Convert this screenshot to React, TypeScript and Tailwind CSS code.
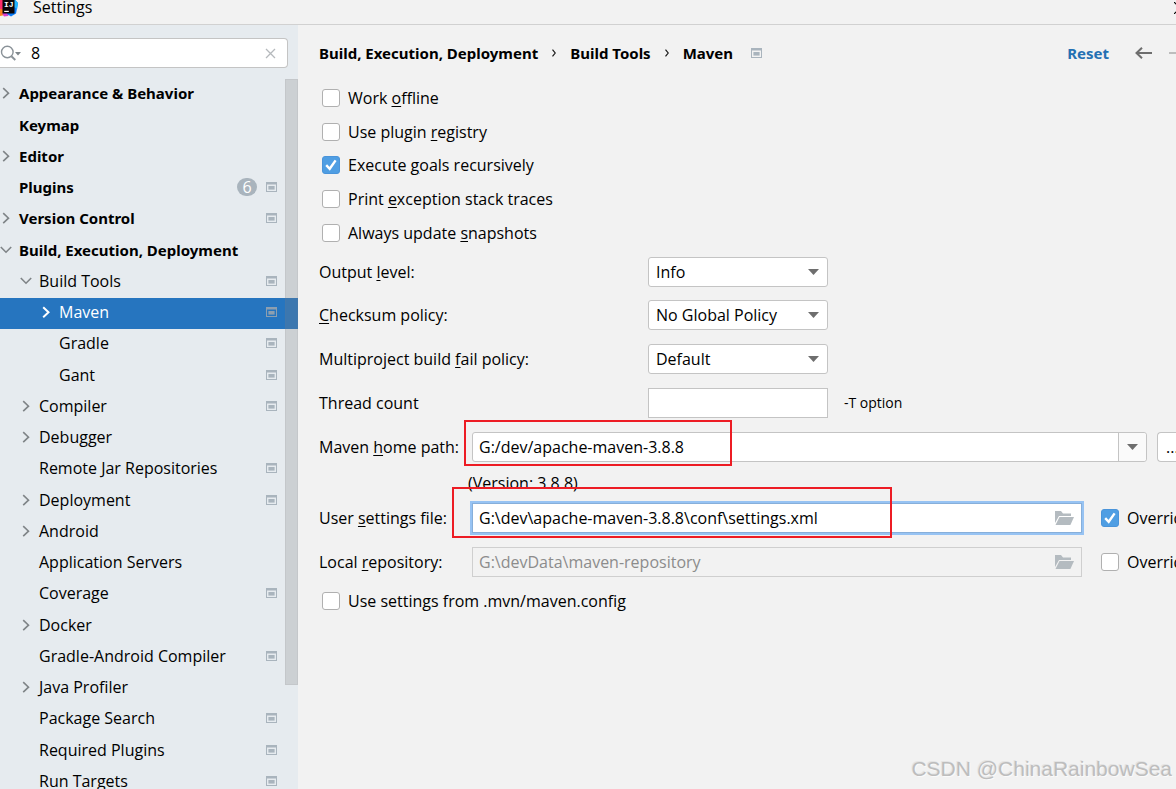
import { useState, type ReactNode } from "react";

type TreeItem = {
  label: string;
  level: 0 | 1 | 2;
  state?: "open" | "closed";
  badge?: number;
  project?: boolean;
  selected?: boolean;
};

const TREE: TreeItem[] = [
  { label: "Appearance & Behavior", level: 0, state: "closed" },
  { label: "Keymap", level: 0 },
  { label: "Editor", level: 0, state: "closed" },
  { label: "Plugins", level: 0, badge: 6, project: true },
  { label: "Version Control", level: 0, state: "closed", project: true },
  { label: "Build, Execution, Deployment", level: 0, state: "open" },
  { label: "Build Tools", level: 1, state: "open", project: true },
  { label: "Maven", level: 2, state: "closed", project: true, selected: true },
  { label: "Gradle", level: 2, project: true },
  { label: "Gant", level: 2, project: true },
  { label: "Compiler", level: 1, state: "closed", project: true },
  { label: "Debugger", level: 1, state: "closed" },
  { label: "Remote Jar Repositories", level: 1, project: true },
  { label: "Deployment", level: 1, state: "closed", project: true },
  { label: "Android", level: 1, state: "closed" },
  { label: "Application Servers", level: 1 },
  { label: "Coverage", level: 1, project: true },
  { label: "Docker", level: 1, state: "closed" },
  { label: "Gradle-Android Compiler", level: 1, project: true },
  { label: "Java Profiler", level: 1, state: "closed" },
  { label: "Package Search", level: 1, project: true },
  { label: "Required Plugins", level: 1, project: true },
  { label: "Run Targets", level: 1, project: true },
];

const INDENT = { 0: "pl-0", 1: "pl-5", 2: "pl-10" };

function Logo() {
  return (
    <svg width="18" height="17" viewBox="0 0 18 17" className="shrink-0" aria-hidden="true">
      <path d="M0 0h5v10H0z" fill="#fe2d6b" />
      <path d="M0 9l4 1 1 5-5 1z" fill="#fc801d" />
      <path d="M2 13h8l-2 3-4 .5z" fill="#d83fd0" />
      <path d="M9 0h6l3 3-2 10.5-5 3L7 14z" fill="#087cfa" />
      <path d="M14 0h1.5L18 3l-.8 6-3.2-2z" fill="#21b5ff" />
      <path d="M2.5 0h12v13.5h-12z" fill="#0a0508" />
      <text x="4" y="6.6" fill="#fff" fontSize="8" fontWeight="700" fontFamily="Liberation Mono, monospace">
        IJ
      </text>
      <path d="M4.2 10.8h4.6v1.2H4.2z" fill="#fff" />
    </svg>
  );
}

function ProjectIcon({ selected = false }: { selected?: boolean }) {
  return (
    <svg
      width="11"
      height="10"
      viewBox="0 0 11 10"
      className={selected ? "shrink-0 text-[#8d9fb0]" : "shrink-0 text-[#a9b4bd]"}
      aria-hidden="true"
    >
      <path d="M0 0h11v10H0zM1 2.5v6.5h9V2.5z" fill="currentColor" fillRule="evenodd" />
      <path d="M2.4 4h6.2v3.6H2.4z" fill="currentColor" />
    </svg>
  );
}

function Chevron({ state, selected }: { state?: "open" | "closed"; selected?: boolean }) {
  return (
    <svg
      width="12"
      height="12"
      viewBox="0 0 12 12"
      className={selected ? "shrink-0 text-white" : "shrink-0 text-[#7f8487]"}
      fill="none"
      stroke="currentColor"
      strokeWidth={selected ? 2 : 1.6}
      aria-hidden="true"
    >
      {state === "closed" && <path d="M3.2 1.2L8.5 6.2L3.2 11.2" />}
      {state === "open" && <path d="M0.8 3L6 8.2L11.2 3" />}
    </svg>
  );
}

function Triangle() {
  return (
    <svg width="11" height="6" viewBox="0 0 11 6" aria-hidden="true">
      <path d="M0 0h11L5.5 6z" fill="#6e6e6e" />
    </svg>
  );
}

function Folder() {
  return (
    <svg width="19" height="14" viewBox="0 0 19 14" aria-hidden="true">
      <path d="M0 0h6l2 2.5h8V5H4L0 12z" fill="#b4bbc0" />
      <path d="M4.5 6H19l-3.6 8H0.5z" fill="#b4bbc0" />
    </svg>
  );
}

function Check({ id, children, defaultChecked = false }: { id: string; children: ReactNode; defaultChecked?: boolean }) {
  return (
    <label htmlFor={id} className="flex items-center gap-2 whitespace-nowrap">
      <span className="relative flex shrink-0">
        <input
          id={id}
          type="checkbox"
          defaultChecked={defaultChecked}
          className="peer size-[18px] appearance-none rounded-[3px] border border-[#b0b0b0] bg-white checked:border-[#4a94da] checked:bg-[#4f9ee3]"
        />
        <svg
          viewBox="0 0 18 18"
          className="pointer-events-none absolute inset-0 hidden size-[18px] peer-checked:block"
          fill="none"
          stroke="#fff"
          strokeWidth="2.4"
          aria-hidden="true"
        >
          <path d="M4.2 9.2L7.7 12.8L13.6 4.4" />
        </svg>
      </span>
      <span>{children}</span>
    </label>
  );
}

function SelectRow({ id, label, options }: { id: string; label: ReactNode; options: string[] }) {
  return (
    <div className="flex items-center">
      <label htmlFor={id} className="w-[329px] shrink-0">
        {label}
      </label>
      <div className="relative w-[180px]">
        <select
          id={id}
          className="block h-[30px] w-full appearance-none rounded-[3px] border border-[#c4c4c4] bg-white pl-[7px] pr-7"
        >
          {options.map((o) => (
            <option key={o}>{o}</option>
          ))}
        </select>
        <span className="pointer-events-none absolute inset-y-0 right-[9px] flex items-center">
          <Triangle />
        </span>
      </div>
    </div>
  );
}

function U({ children }: { children: ReactNode }) {
  return <span className="underline decoration-1 underline-offset-2">{children}</span>;
}

function Sidebar() {
  const [query, setQuery] = useState("8");
  return (
    <aside className="flex w-[298px] shrink-0 flex-col overflow-hidden bg-[#e6ebef] pt-[13px]">
      <div className="mr-[10px] flex h-[30px] shrink-0 items-center rounded-r-[4px] border border-l-0 border-[#c4c4c4] bg-white pr-[11px]">
        <svg width="22" height="16" viewBox="0 0 22 16" className="shrink-0" fill="none" aria-hidden="true">
          <circle cx="7.3" cy="7" r="5.8" stroke="#8a9298" strokeWidth="1.4" />
          <path d="M11.4 11.2L15.3 15" stroke="#8a9298" strokeWidth="1.9" />
          <path d="M15 7h6l-3 3.6z" fill="#7f878c" />
        </svg>
        <input
          type="text"
          aria-label="Search settings"
          value={query}
          onChange={(e) => setQuery(e.target.value)}
          className="min-w-0 flex-1 bg-transparent pl-[9px] outline-none"
        />
        <button type="button" aria-label="Clear search" onClick={() => setQuery("")} className="shrink-0">
          <svg width="11" height="11" viewBox="0 0 11 11" stroke="#b5b9bc" strokeWidth="1.3" aria-hidden="true">
            <path d="M1 1l9 9M10 1l-9 9" />
          </svg>
        </button>
      </div>
      <nav aria-label="Settings categories" className="relative mt-[11px] min-h-0 flex-1 overflow-hidden">
        <ul className="[&>li:nth-child(4n+1)]:mb-px">
          {TREE.map((item) => (
            <li key={item.label}>
              <a
                href="#"
                className={`flex h-[31px] items-center pr-[21px] pb-1 ${INDENT[item.level]} ${
                  item.selected ? "bg-[#2675bf] text-white" : ""
                }`}
              >
                <Chevron state={item.state} selected={item.selected} />
                <span
                  className={`flex-1 pl-[7px] whitespace-nowrap ${
                    item.level === 0 ? "font-['Noto_Sans',sans-serif] text-[15px] font-bold" : ""
                  }`}
                >
                  {item.label}
                </span>
                {item.badge && (
                  <span className="mr-[9px] flex h-[18px] w-5 items-center justify-center rounded-full bg-[#a9b4bd] text-white">
                    {item.badge}
                  </span>
                )}
                {item.project && <ProjectIcon selected={item.selected} />}
              </a>
            </li>
          ))}
        </ul>
        <div className="absolute top-0 right-0 h-[606px] w-[13px] border border-[#808080]/10 bg-[#808080]/25" />
      </nav>
    </aside>
  );
}

function Crumb({ children }: { children: ReactNode }) {
  return <span className="whitespace-nowrap">{children}</span>;
}

function Separator() {
  return (
    <svg width="4" height="8" viewBox="0 0 4 8" className="mx-[14px] shrink-0" fill="none" stroke="#1a1a1a" strokeWidth="1.2" aria-hidden="true">
      <path d="M0.5 0.6L3.2 4L0.5 7.4" />
    </svg>
  );
}

function Content() {
  return (
    <main className="min-w-0 flex-1 overflow-hidden pl-[21px]">
      <div className="flex h-14 items-center font-['Noto_Sans',sans-serif] text-[15px] font-bold">
        <Crumb>Build, Execution, Deployment</Crumb>
        <Separator />
        <Crumb>Build Tools</Crumb>
        <Separator />
        <Crumb>Maven</Crumb>
        <span className="ml-[18px]">
          <ProjectIcon />
        </span>
        <span className="flex-1" />
        <button type="button" className="font-bold text-[#2470b3]">
          Reset
        </button>
        <button type="button" aria-label="Back" className="ml-[26px]">
          <svg width="17" height="12" viewBox="0 0 17 12" fill="none" stroke="#6e6e6e" strokeWidth="2" aria-hidden="true">
            <path d="M1.5 6H17M7 0.8L1.5 6L7 11.2" />
          </svg>
        </button>
        <button type="button" aria-label="Forward" className="ml-[17px] w-[7px] overflow-hidden">
          <svg width="17" height="12" viewBox="0 0 17 12" className="max-w-none" fill="none" stroke="#bdbdbd" strokeWidth="2" aria-hidden="true">
            <path d="M0 6H15.5M10 0.8L15.5 6L10 11.2" />
          </svg>
        </button>
      </div>

      <div className="grid h-[169px] grid-rows-5 items-center justify-start pl-[3px]">
        <Check id="offline">
          Work <U>o</U>ffline
        </Check>
        <Check id="registry">
          Use plugin <U>r</U>egistry
        </Check>
        <Check id="recursive" defaultChecked>
          Execute <U>g</U>oals recursively
        </Check>
        <Check id="traces">
          Print <U>e</U>xception stack traces
        </Check>
        <Check id="snapshots">
          Always update <U>s</U>napshots
        </Check>
      </div>

      <div className="grid h-[131px] grid-rows-3">
        <SelectRow id="output" label={<>Output <U>l</U>evel:</>} options={["Info", "Debug"]} />
        <SelectRow id="checksum" label={<><U>C</U>hecksum policy:</>} options={["No Global Policy", "Fail", "Warn"]} />
        <SelectRow id="fail" label={<>Multiproject build <U>f</U>ail policy:</>} options={["Default", "At End", "Never"]} />
      </div>
      <div className="flex h-11 items-center">
        <label htmlFor="threads" className="w-[329px] shrink-0">
          Thread count
        </label>
        <input id="threads" type="text" className="h-[30px] w-[180px] border border-[#c4c4c4] bg-white px-[7px]" />
        <span className="ml-4 text-[14px]">-T option</span>
      </div>

      <div className="relative flex h-11 items-center">
        <label htmlFor="home" className="w-[153px] shrink-0 whitespace-nowrap">
          Maven <U>h</U>ome path:
        </label>
        <div className="flex h-[30px] min-w-0 flex-1 rounded-[3px] border border-[#c4c4c4] bg-white">
          <input
            id="home"
            type="text"
            defaultValue="G:/dev/apache-maven-3.8.8"
            className="min-w-0 flex-1 bg-transparent px-[6px] outline-none"
          />
          <button
            type="button"
            aria-label="Show Maven homes"
            className="flex w-7 items-center justify-center rounded-r-[3px] border-l border-[#c4c4c4] bg-[#fafafa]"
          >
            <Triangle />
          </button>
        </div>
        <button
          type="button"
          aria-label="Browse Maven home"
          className="ml-[10px] h-[30px] w-[19px] shrink-0 overflow-hidden rounded-l-[4px] border border-r-0 border-[#c4c4c4] bg-white pl-2 text-left"
        >
          ...
        </button>
        <div className="pointer-events-none absolute -top-[5px] left-[145px] z-10 h-[46px] w-[268px] border-2 border-[#ed1c24]" />
      </div>
      <p className="flex h-[27px] items-center pl-[149px]">(Version: 3.8.8)</p>

      <div className="relative flex h-11 items-center">
        <label htmlFor="settings" className="w-[153px] shrink-0 whitespace-nowrap">
          User <U>s</U>ettings file:
        </label>
        <div className="flex h-[30px] min-w-0 flex-1 items-center border border-[#87afda] bg-white pr-[7px] ring-2 ring-[#97c3f3]">
          <input
            id="settings"
            type="text"
            defaultValue="G:\dev\apache-maven-3.8.8\conf\settings.xml"
            className="min-w-0 flex-1 bg-transparent px-[6px] outline-none"
          />
          <button type="button" aria-label="Browse settings file">
            <Folder />
          </button>
        </div>
        <div className="ml-[19px] w-[75px] shrink-0 overflow-hidden">
          <Check id="override-settings" defaultChecked>
            Override
          </Check>
        </div>
        <div className="pointer-events-none absolute -top-[9px] left-[133px] z-10 h-[51px] w-[440px] border-2 border-[#ed1c24]" />
      </div>
      <div className="flex h-11 items-center">
        <label htmlFor="repository" className="w-[153px] shrink-0 whitespace-nowrap">
          Local <U>r</U>epository:
        </label>
        <div className="flex h-[30px] min-w-0 flex-1 items-center border border-[#cfcfcf] pr-[7px]">
          <input
            id="repository"
            type="text"
            disabled
            defaultValue="G:\devData\maven-repository"
            className="min-w-0 flex-1 bg-transparent px-[6px] text-[#8c8c8c]"
          />
          <button type="button" aria-label="Browse repository">
            <Folder />
          </button>
        </div>
        <div className="ml-[19px] w-[75px] shrink-0 overflow-hidden">
          <Check id="override-repository">Override</Check>
        </div>
      </div>
      <div className="flex h-[34px] items-center pl-[3px]">
        <Check id="mvn-config">Use settings from .mvn/maven.config</Check>
      </div>
    </main>
  );
}

export default function App() {
  return (
    <div className="relative flex h-screen flex-col overflow-hidden bg-[#f2f2f2] font-['Open_Sans','Noto_Sans',sans-serif] text-[16px] leading-5 text-black">
      <header className="flex h-[25px] shrink-0 items-center overflow-hidden border-b border-[#d1d1d1] pb-2">
        <Logo />
        <h1 className="ml-[15px] flex-1 pb-0.5 leading-4">Settings</h1>
        <button type="button" aria-label="Close" className="w-[2px] overflow-hidden">
          <svg width="12" height="12" viewBox="0 0 12 12" className="max-w-none" stroke="#000" strokeWidth="1.2" aria-hidden="true">
            <path d="M0 0l12 12M12 0L0 12" />
          </svg>
        </button>
      </header>
      <div className="flex min-h-0 flex-1">
        <Sidebar />
        <Content />
      </div>
      <div className="pointer-events-none absolute right-1 bottom-1 font-['Liberation_Sans',sans-serif] text-[21px] leading-8 text-[#bdbdbd] [text-shadow:-1px_-1px_0_#e4e4e4,1px_1px_0_#fafafa]">
        CSDN @ChinaRainbowSea
      </div>
    </div>
  );
}
